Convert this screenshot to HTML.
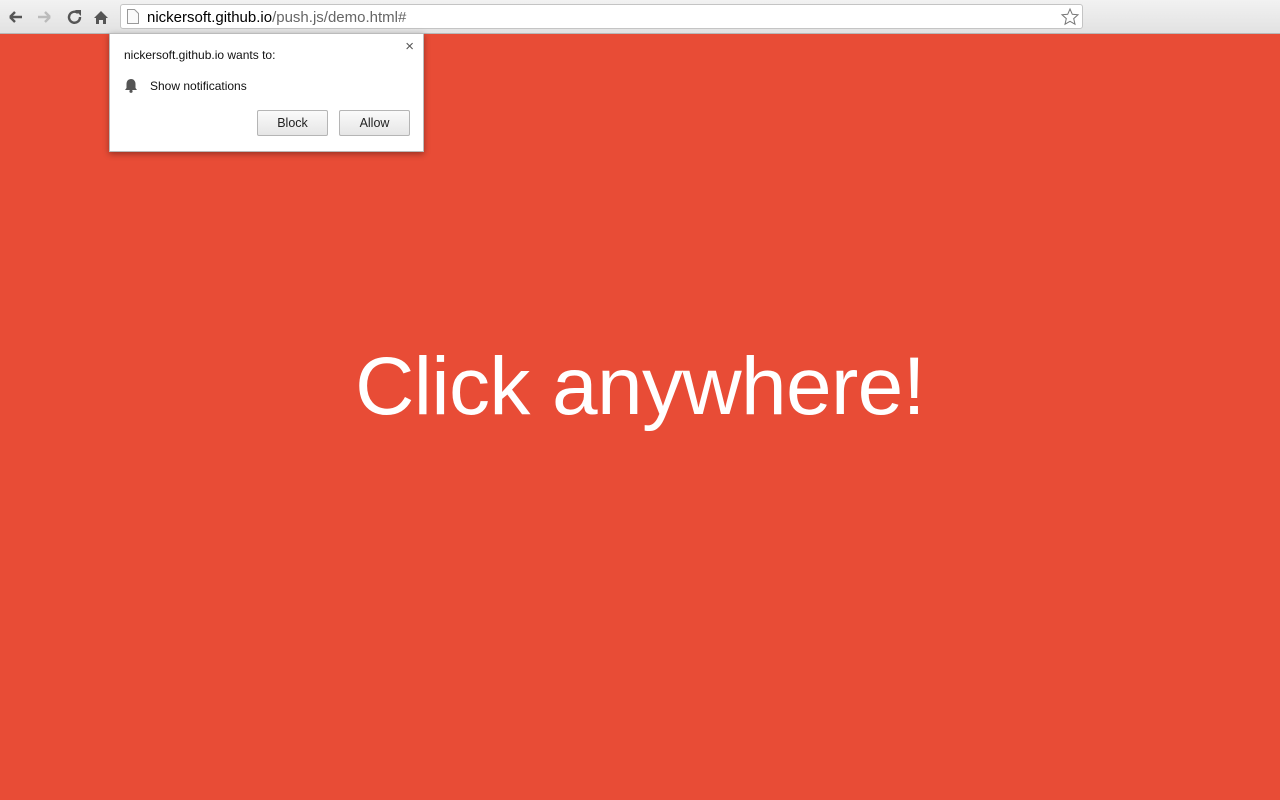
<!DOCTYPE html>
<html><head><meta charset="utf-8"><style>
html,body{margin:0;padding:0;width:1280px;height:800px;overflow:hidden;font-family:"Liberation Sans",sans-serif}
body{background:#e84c36;position:relative}
.tb{position:absolute;left:0;top:0;width:1280px;height:33px;background:linear-gradient(#f2f2f2,#e2e2e2);border-bottom:1px solid #b8b8b8}
.url{position:absolute;left:120px;top:4px;width:963px;height:25px;background:#fff;border:1px solid #c4c4c4;border-radius:3px;box-sizing:border-box}
.url span{position:absolute;left:26px;top:4px;font-size:15px;color:#000}
.url span i{font-style:normal;color:#666}
.pop{position:absolute;left:109px;top:33px;width:315px;height:119px;background:#fff;border:1px solid #bbb;box-shadow:0 2px 6px rgba(0,0,0,.35);box-sizing:border-box;font-size:12px;color:#111}
.btn{position:absolute;top:76px;width:71px;height:26px;border:1px solid #b5b5b5;border-radius:2px;background:linear-gradient(#fafafa,#e6e6e6);box-sizing:border-box;text-align:center;line-height:24px;font-size:12.5px;color:#222}
.big{position:absolute;left:0;width:1280px;top:337px;text-align:center;color:#fff;font-size:82px;letter-spacing:-0.6px;line-height:100px}
</style></head><body>
<div class="tb">
<svg style="position:absolute;left:8px;top:9px" width="100" height="16" viewBox="0 0 100 16">
<path d="M2 8h12M2 8l5-5M2 8l5 5" stroke="#555" stroke-width="2.4" fill="none"/>
<path d="M30 8h12M42 8l-5-5M42 8l-5 5" stroke="#bbb" stroke-width="2.4" fill="none"/>
<path d="M70 4a5.5 5.5 0 1 0 2 4" stroke="#555" stroke-width="2.4" fill="none"/><path d="M67 1h6v6z" fill="#555"/>
<path d="M86 9l7-7 7 7h-2v6h-3v-4h-4v4h-3v-6z" fill="#555"/>
</svg>
<div class="url">
<svg style="position:absolute;left:6px;top:4px" width="12" height="15" viewBox="0 0 12 15"><path d="M.5.5h7l4 4v10H.5z" fill="#fafafa" stroke="#999"/></svg>
<span>nickersoft.github.io<i>/push.js/demo.html#</i></span>
<svg style="position:absolute;right:2px;top:2px" width="20" height="20" viewBox="0 0 20 20"><path d="M10 2l2.3 5.3 5.7.5-4.3 3.8 1.3 5.6L10 14.3l-5 2.9 1.3-5.6L2 7.8l5.7-.5z" fill="none" stroke="#777" stroke-width="1"/></svg>
</div>
</div>
<div class="pop">
<div style="position:absolute;left:14px;top:14px">nickersoft.github.io wants to:</div>
<div style="position:absolute;right:9px;top:4px;font-size:15px;color:#555">×</div>
<svg style="position:absolute;left:14px;top:44px" width="14" height="15" viewBox="0 0 14 15"><path d="M7 1c-3 0-4.5 2.5-4.5 5v4L1 12h12l-1.5-2V6C11.5 3.5 10 1 7 1z" fill="#555"/><circle cx="7" cy="13.3" r="1.6" fill="#555"/></svg>
<div style="position:absolute;left:40px;top:45px">Show notifications</div>
<div class="btn" style="left:147px">Block</div>
<div class="btn" style="left:229px">Allow</div>
</div>
<div class="big">Click anywhere!</div>
</body></html>
